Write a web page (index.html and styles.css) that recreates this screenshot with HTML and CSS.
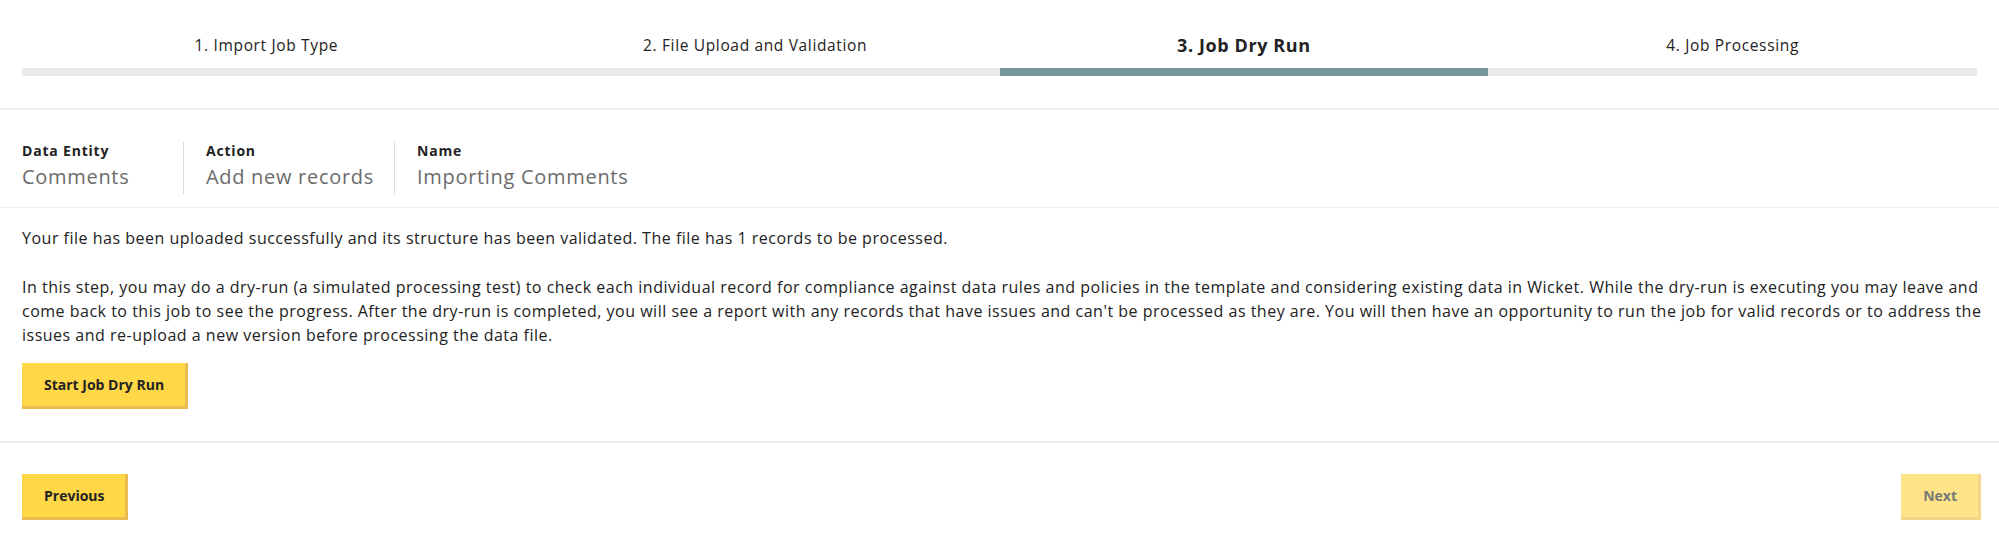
FILE: index.html
```html
<!DOCTYPE html>
<html lang="en">
	<head>
		<meta charset="UTF-8">
		<title>Import Job - Dry Run</title>
		<link rel="stylesheet" href="styles.css">
	</head>
	<body>
		<div class="wizard">
			<ol class="steps">
				<li class="step">1. Import Job Type</li>
				<li class="step">2. File Upload and Validation</li>
				<li class="step active">3. Job Dry Run</li>
				<li class="step">4. Job Processing</li>
			</ol>

			<div class="summary">
				<div class="field first">
					<label>Data Entity</label>
					<span>Comments</span>
				</div>
				<div class="field">
					<label>Action</label>
					<span>Add new records</span>
				</div>
				<div class="field">
					<label>Name</label>
					<span>Importing Comments</span>
				</div>
			</div>

			<div class="content">
				<p>Your file has been uploaded successfully and its structure has been validated. The file has 1 records to be processed.</p>
				<p>In this step, you may do a dry-run (a simulated processing test) to check each individual record for compliance against data rules and policies in the template and considering existing data in Wicket. While the dry-run is executing you may leave and come back to this job to see the progress. After the dry-run is completed, you will see a report with any records that have issues and can't be processed as they are. You will then have an opportunity to run the job for valid records or to address the issues and re-upload a new version before processing the data file.</p>
				<button type="button" class="btn">Start Job Dry Run</button>
			</div>

			<div class="footer">
				<button type="button" class="btn">Previous</button>
				<button type="button" class="btn" disabled>Next</button>
			</div>
		</div>
	</body>
</html>
```

FILE: styles.css
```css
body {
	margin: 0;
	font-family: "Open Sans", "Liberation Sans", sans-serif;
	color: #222;
	background: #fff;
}

.steps {
	display: flex;
	list-style: none;
	margin: 0;
	padding: 35px 22px 32px;
	border-bottom: 2px solid #eeeeee;
}

.steps li.step {
	flex: 1;
	text-align: center;
	font-size: 15.5px;
	letter-spacing: 0.65px;
	line-height: 20px;
	padding-bottom: 13px;
	border-bottom: 8px solid #ebebeb;
}

.steps li.active {
	font-size: 18px;
	font-weight: 700;
	letter-spacing: 0.6px;
	border-bottom-color: #75969c;
}

.summary {
	display: flex;
	padding: 32px 22px 13px;
	border-bottom: 1px solid #eeeeee;
}

.summary .field {
	display: flex;
	flex-direction: column;
	padding: 0 20px 0 22px;
	border-left: 1px solid #dddddd;
}

.summary .field.first {
	padding-left: 0;
	border-left: none;
	width: 141px;
}

.summary label {
	font-size: 14px;
	font-weight: 700;
	letter-spacing: 0.8px;
	line-height: 18px;
}

.summary span {
	font-size: 20px;
	font-weight: 400;
	letter-spacing: 0.7px;
	line-height: 34px;
	color: #6b6b6b;
}

.content {
	padding: 18px 14px 32px 22px;
	border-bottom: 2px solid #eeeeee;
	font-size: 16px;
	letter-spacing: 0.5px;
	line-height: 24px;
}

.content p {
	margin: 0 0 25px;
}

.content p + p {
	margin-bottom: 16px;
}

.btn {
	font-family: inherit;
	font-size: 14px;
	font-weight: 700;
	letter-spacing: 0;
	color: #222;
	background: #ffd747;
	border: none;
	border-right: 3px solid #ebbb50;
	border-bottom: 3px solid #ebbb50;
	height: 46px;
	padding: 0 21px 0 22px;
	cursor: pointer;
}

.btn:disabled {
	background: #ffe587;
	border-color: #f4d589;
	color: #777;
	cursor: default;
}

.footer {
	display: flex;
	justify-content: space-between;
	padding: 31px 18px 0 22px;
}
```
